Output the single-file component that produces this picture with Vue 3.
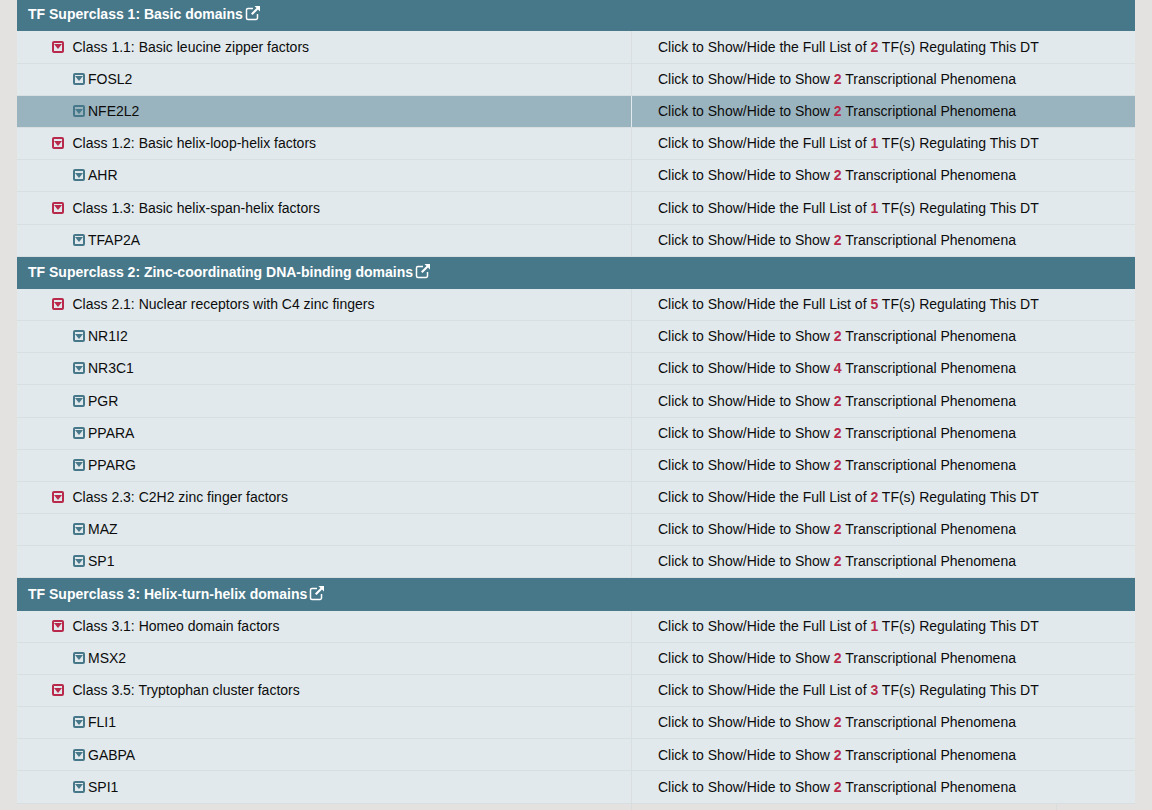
<script setup>
const groups = [
  { title: 'TF Superclass 1: Basic domains', classes: [
    { name: 'Class 1.1: Basic leucine zipper factors', n: 2, tfs: [['FOSL2', 2], ['NFE2L2', 2, true]] },
    { name: 'Class 1.2: Basic helix-loop-helix factors', n: 1, tfs: [['AHR', 2]] },
    { name: 'Class 1.3: Basic helix-span-helix factors', n: 1, tfs: [['TFAP2A', 2]] },
  ]},
  { title: 'TF Superclass 2: Zinc-coordinating DNA-binding domains', classes: [
    { name: 'Class 2.1: Nuclear receptors with C4 zinc fingers', n: 5, tfs: [['NR1I2', 2], ['NR3C1', 4], ['PGR', 2], ['PPARA', 2], ['PPARG', 2]] },
    { name: 'Class 2.3: C2H2 zinc finger factors', n: 2, tfs: [['MAZ', 2], ['SP1', 2]] },
  ]},
  { title: 'TF Superclass 3: Helix-turn-helix domains', classes: [
    { name: 'Class 3.1: Homeo domain factors', n: 1, tfs: [['MSX2', 2]] },
    { name: 'Class 3.5: Tryptophan cluster factors', n: 3, tfs: [['FLI1', 2], ['GABPA', 2], ['SPI1', 2]] },
  ]},
]
</script>

<template>
  <div class="page">
    <div class="table">
      <template v-for="g in groups" :key="g.title">
        <div class="head">
          <span>{{ g.title }}</span>
          <svg class="ext" viewBox="0 0 16 16" width="16" height="16">
            <path d="M12.5 9v4a1.5 1.5 0 0 1-1.5 1.5H3A1.5 1.5 0 0 1 1.5 13V5A1.5 1.5 0 0 1 3 3.5h5" fill="none" stroke="#fff" stroke-width="1.5"/>
            <path d="M9.5 1H15v5.5l-2-2-5.5 5.5-1.5-1.5L11.5 3z" fill="#fff"/>
          </svg>
        </div>
        <template v-for="c in g.classes" :key="c.name">
          <div class="row">
            <div class="left cls">
              <span class="box red"><i></i></span>
              <span>{{ c.name }}</span>
            </div>
            <div class="right">Click to Show/Hide the Full List of <b>{{ c.n }}</b> TF(s) Regulating This DT</div>
          </div>
          <div v-for="t in c.tfs" :key="t[0]" class="row" :class="{ active: t[2] }">
            <div class="left tf">
              <span class="box teal"><i></i></span>
              <span>{{ t[0] }}</span>
            </div>
            <div class="right">Click to Show/Hide to Show <b>{{ t[1] }}</b> Transcriptional Phenomena</div>
          </div>
        </template>
      </template>
      <div class="tail"><div></div><div></div><div></div></div>
    </div>
  </div>
</template>

<style>
html, body { margin: 0; background: #e3e2e0; overflow: hidden; }
</style>

<style scoped>
.page {
  height: 810px;
  overflow: hidden;
  padding: 0 17px;
  box-sizing: border-box;
  font: 14px/20px "Liberation Sans", Arial, sans-serif;
  color: #0c0c0c;
}
.table { width: 1118px; }
.head {
  height: 32.18px;
  box-sizing: border-box;
  background: #47788a;
  color: #fff;
  font-weight: 700;
  display: flex;
  align-items: center;
  gap: 2px;
  padding: 0 0 1px 11px;
}
.head:first-child { height: 31.49px; padding-bottom: 3px; }
.ext { margin-top: -2px; }
.row {
  display: grid;
  grid-template-columns: 615px 1fr;
  height: 32.18px;
  box-sizing: border-box;
  background: #e1e9ec;
  border-bottom: 1px solid #d9dee0;
}
.left {
  display: flex;
  align-items: center;
  border-right: 1px solid #d9dee0;
  padding-bottom: 0.7px;
  box-sizing: border-box;
}
.cls { padding-left: 35px; gap: 8.5px; }
.tf { padding-left: 56px; gap: 3px; }
.right { display: flex; align-items: center; padding: 0 0 0.7px 26px; white-space: pre; box-sizing: border-box; }
.right b { color: #b8294b; }
.row.active { background: #9ab4bf; border-bottom-color: #d9dee0; }
.row.active .left { border-right-color: #e1e9ec; }
.box {
  border-radius: 2px;
  border: 2px solid;
  width: 8px;
  height: 8px;
  display: flex;
  align-items: center;
  justify-content: center;
  flex: none;
}
.box i {
  width: 0;
  height: 0;
  border-left: 4px solid transparent;
  border-right: 4px solid transparent;
  border-top: 5px solid;
}
.red { border-color: #b8294b; color: #b8294b; }
.teal { border-color: #47788a; color: #47788a; }
.tail {
  display: grid;
  grid-template-columns: 615px 425px 1fr;
  height: 10px;
}
.tail div { border-right: 1px solid #d9dcdc; }
.tail div:last-child { border-right: 0; }
</style>
